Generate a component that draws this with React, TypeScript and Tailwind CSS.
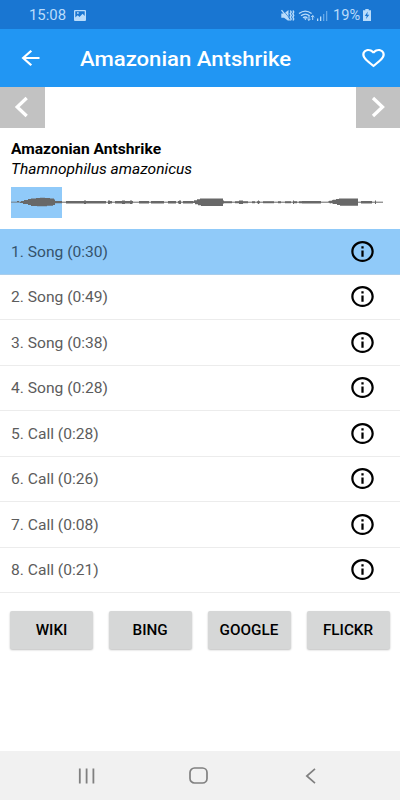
import type { ReactNode } from 'react';

const TRACKS = [
  '1. Song (0:30)',
  '2. Song (0:49)',
  '3. Song (0:38)',
  '4. Song (0:28)',
  '5. Call (0:28)',
  '6. Call (0:26)',
  '7. Call (0:08)',
  '8. Call (0:21)',
];

const LINKS = ['WIKI', 'BING', 'GOOGLE', 'FLICKR'];

function Wide({ children, className = '' }: { children: ReactNode; className?: string }) {
  return <span className={`inline-block whitespace-nowrap ${className}`}>{children}</span>;
}

function StatusBar() {
  return (
    <div className="flex h-[29px] items-center justify-between bg-[#1976d2] pl-[29px] pr-[28px] pt-px text-[#b9dcfb]">
      <div className="flex items-center">
        <Wide className="w-[45px] origin-left scale-x-[1.05] text-[14.2px] leading-[28px]">15:08</Wide>
        <svg className="h-[11px] w-[12px]" viewBox="0 0 12 11">
          <path
            fill="currentColor"
            fillRule="evenodd"
            d="M1 0H11Q12 0 12 1V10Q12 11 11 11H1Q0 11 0 10V1Q0 0 1 0ZM1.3 1.3V7.6L3.7 5.2L5.5 7L8.6 3.8L10.7 6V1.3ZM3 2.3H4.7V3.8H3Z"
          />
        </svg>
      </div>
      <div className="flex items-center">
        <svg className="h-[13px] w-[52px]" viewBox="0 0 52 13">
          <path fill="currentColor" d="M.3 4.5H3L7.5 1V12L3 8.7H.3Z" />
          <path stroke="#1976d2" strokeWidth=".7" d="M1.7 .8L9.3 10.2" />
          <path stroke="currentColor" strokeWidth="1.3" d="M.5 1.2L8.6 11.3" />
          <path fill="none" stroke="currentColor" strokeWidth="1.4" d="M9.3 1.5L10.2 3L9.2 4.7L10.2 6.4L9.2 8.1L10.2 10L9.4 11.5M12 1.5L12.7 3L11.8 4.7L12.7 6.4L11.8 8.1L12.7 10L12 11.5" />
          <g fill="none" stroke="currentColor" strokeWidth="1.3">
            <path d="M18 4.6Q24.3 -.5 30.6 4.6M20 6.8Q24.3 3.4 28.6 6.8M22 8.8Q24.3 7.2 26.4 8.8" />
            <path d="M28 6.5V11.5M26.4 9.8L28 11.4L29.6 9.8M31.7 11V6.5M30.1 8.1L31.7 6.5L33.3 8.1" strokeWidth="1" />
          </g>
          <path fill="currentColor" d="M23 9.2H25.8L24.4 11.2ZM36 9.5H37.3V12H36ZM39 7.5H40.3V12H39Z" />
          <path fill="#66a9e8" d="M42 5H43.3V12H42ZM45 2H46.3V12H45Z" />
        </svg>
        <Wide className="w-[30px] origin-left scale-x-[1.03] text-[14.2px] leading-[28px]">19%</Wide>
        <svg className="h-[12px] w-[9px]" viewBox="0 0 9 12">
          <path fill="currentColor" d="M2.3 0H5.7V1.3H8V12H0V1.3H2.3Z" />
          <path fill="#1976d2" d="M4.8 2.5L1.8 7H3.7L3 10L6.3 5.8H4.2Z" />
        </svg>
      </div>
    </div>
  );
}

function Header() {
  return (
    <header className="flex h-[58px] items-center bg-[#2196f3] pl-[17px] pr-[13px] text-white">
      <svg className="h-[24px] w-[27px]" viewBox="0 0 24 24" preserveAspectRatio="none">
        <path fill="currentColor" d="M20 11H7.83l5.59-5.59L12 4l-8 8 8 8 1.41-1.41L7.83 13H20v-2z" />
      </svg>
      <h1 className="ml-[36px] flex-1 pt-[2px] text-[20px] font-medium leading-[24px]">
        <Wide className="origin-left scale-x-[1.105]">Amazonian Antshrike</Wide>
      </h1>
      <svg className="h-[24px] w-[27px]" viewBox="0 0 24 24" preserveAspectRatio="none">
        <path
          fill="currentColor"
          d="M16.5 3c-1.74 0-3.41.81-4.5 2.09C10.91 3.81 9.24 3 7.5 3 4.42 3 2 5.42 2 8.5c0 3.78 3.4 6.86 8.55 11.54L12 21.35l1.45-1.32C18.6 15.36 22 12.28 22 8.5 22 5.42 19.58 3 16.5 3zm-4.4 15.55l-.1.1-.1-.1C7.14 14.24 4 11.39 4 8.5 4 6.5 5.5 5 7.5 5c1.54 0 3.04.99 3.57 2.36h1.87C13.46 5.99 14.96 5 16.5 5c2 0 3.5 1.5 3.5 3.5 0 2.89-3.14 5.74-7.9 10.05z"
        />
      </svg>
    </header>
  );
}

function Pager() {
  return (
    <div className="flex h-[41px] justify-between">
      <button className="flex w-[44.5px] items-center justify-center bg-[#c2c2c2] pb-px">
        <svg className="h-[22px] w-[16px]" viewBox="0 0 16 22">
          <path fill="none" stroke="#fff" strokeWidth="3.3" d="M12.7 2L3.2 11L12.7 20" />
        </svg>
      </button>
      <button className="flex w-[44.5px] items-center justify-center bg-[#c2c2c2] pb-px">
        <svg className="h-[22px] w-[16px]" viewBox="0 0 16 22">
          <path fill="none" stroke="#fff" strokeWidth="3.3" d="M3 2L12.5 11L3 20" />
        </svg>
      </button>
    </div>
  );
}

function Waveform() {
  return (
    <svg className="mt-[8px] ml-[11px] block h-[31px] w-[374px]" viewBox="0 0 374 31">
      <rect width="51" height="31" fill="#90caf9" />
      <g fill="#686868">
        <path d="M0 14.8H6V14H8V14.8H10V14H13V13H17V12H20V11.5H25V11H29V10.8H34V11H39V11.5H43V12.5H44V14H51V16.2H44V18H42V18.8H36V19.3H26V19H20V18H17V17H12V16H9V15.6H0Z" />
        <path d="M181 14.2H183V13.2H186V12.2H189V11.4H212V13.5H213V16.5H212V19H190V18.3H187V17.3H184V16H181Z" />
        <path d="M317 14.8L319 13.5L320 14L322 12.7H325V12H328V11.4H347V18.7H329V18H326V17H322L321 16L319 16.6Z" />
      </g>
      <g fill="none" stroke="#686868">
        <path strokeWidth="1" d="M51 15.2H182M212 15.2H318M346 15.2H372" />
        <path strokeWidth="2.5" d="M55 15.2H95M98 15.2H101M104 15.2H122M128 15.2H138M140 15.2H153M157 15.2H165M167 15.2H170M172 15.2H182" />
        <path strokeWidth="2" d="M212 15.2H221M224 15.2H237M241 15.2H244M246 15.2H249M252 15.2H263M267 15.2H270M274 15.2H280M283 15.2H286M288 15.2H291" />
        <path strokeWidth="2.5" d="M291 15.2H310M350 15.2H361" />
        <path strokeWidth="3.4" d="M73 15.2h2M97 15.2h2M111 15.2h3M119 15.2h2M168 15.2h2M228 15.2h4M247 15.2h1M282 15.2h1M364 15.2h1" />
      </g>
    </svg>
  );
}

function InfoIcon() {
  return (
    <svg className="h-[25px] w-[27px] text-black" viewBox="0 0 24 24" preserveAspectRatio="none">
      <path
        fill="currentColor"
        d="M11 7h2v2h-2zm0 4h2v6h-2zm1-9C6.48 2 2 6.48 2 12s4.48 10 10 10 10-4.48 10-10S17.52 2 12 2zm0 18c-4.41 0-8-3.59-8-8s3.59-8 8-8 8 3.59 8 8-3.59 8-8 8z"
      />
    </svg>
  );
}

export default function App() {
  return (
    <div className="flex h-[800px] w-[400px] flex-col overflow-hidden bg-white font-[Roboto,sans-serif]">
      <StatusBar />
      <Header />
      <Pager />
      <div className="pl-[11px] pt-[11px] text-[14.2px] leading-[20px] text-black">
        <p className="font-bold">
          <Wide className="origin-left scale-x-[1.1]">Amazonian Antshrike</Wide>
        </p>
        <p className="italic">
          <Wide className="origin-left scale-x-[1.095]">Thamnophilus amazonicus</Wide>
        </p>
      </div>
      <Waveform />
      <ul className="mt-[11px]">
        {TRACKS.map((track, i) => (
          <li
            key={track}
            className={`flex h-[45.5px] items-center justify-between border-b pl-[11px] pr-[24.5px] text-[14.2px] ${
              i === 0 ? 'border-[#a9cdeb] bg-[#90caf9] text-[#35536c]' : 'border-[#ececec] text-[#5c5c5c]'
            }`}
          >
            <Wide className="origin-left scale-x-[1.1] pt-[2.5px]">{track}</Wide>
            <InfoIcon />
          </li>
        ))}
      </ul>
      <div className="flex justify-between pl-[9.5px] pr-[10px] pt-[18px]">
        {LINKS.map((label) => (
          <button
            key={label}
            className="h-[38px] w-[83.5px] rounded-[2px] bg-[#d6d7d7] pt-px text-[14px] font-medium text-black shadow-[0_1px_2px_rgba(0,0,0,0.25)]"
          >
            <Wide className="scale-x-[1.09]">{label}</Wide>
          </button>
        ))}
      </div>
      <nav className="mt-auto flex h-[49px] items-center justify-between bg-[#f1f1f1] pl-[78px] pr-[84px]">
        <svg className="h-[16px] w-[17px]" viewBox="0 0 17 16">
          <path stroke="#808080" strokeWidth="1.8" d="M1.8 .5V15.5M8.6 .5V15.5M15.4 .5V15.5" />
        </svg>
        <svg className="mr-[3px] h-[17px] w-[19px]" viewBox="0 0 19 17">
          <rect x="1" y="1" width="17" height="15" rx="4.5" fill="none" stroke="#808080" strokeWidth="1.7" />
        </svg>
        <svg className="h-[16px] w-[11px]" viewBox="0 0 11 16">
          <path fill="none" stroke="#808080" strokeWidth="1.7" d="M10 .8L1.8 8L10 15.2" />
        </svg>
      </nav>
    </div>
  );
}
